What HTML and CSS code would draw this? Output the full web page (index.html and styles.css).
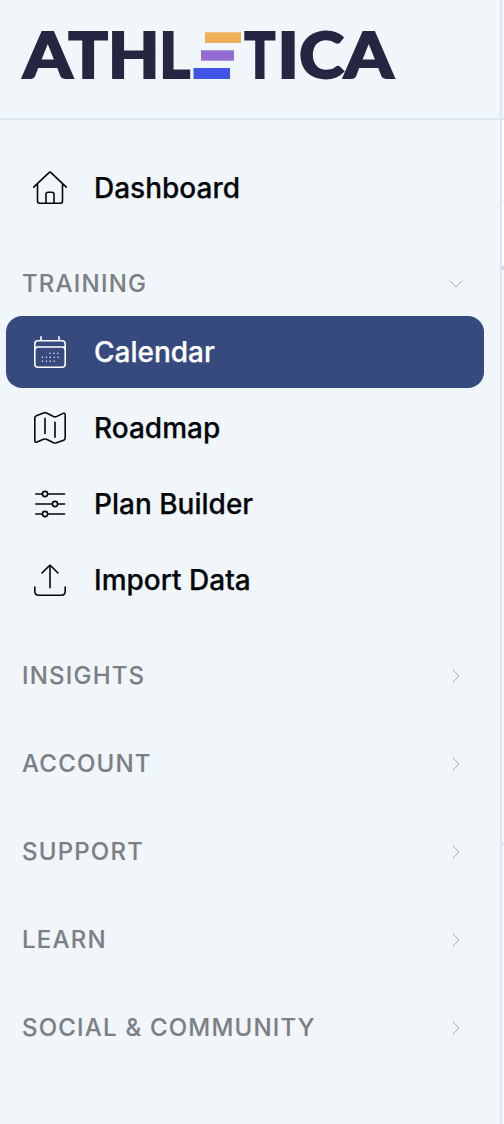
FILE: index.html
```html
<!DOCTYPE html>
<html lang="en">
<head>
<meta charset="utf-8">
<title>Athletica</title>
<link rel="stylesheet" href="styles.css">
</head>
<body>
<div class="app">
  <aside class="sidebar">
    <header class="brand">
      <svg class="logo" width="396" height="104" viewBox="10 5 396 104" role="img" aria-label="Athletica">
        <g class="wordmark">
          <text x="23" y="78.2" textLength="49.5" lengthAdjust="spacingAndGlyphs">A</text>
          <text x="68.3" y="78.2" textLength="39.8" lengthAdjust="spacingAndGlyphs">T</text>
          <text x="108" y="78.2" textLength="51.5" lengthAdjust="spacingAndGlyphs">H</text>
          <text x="159.3" y="78.2" textLength="31" lengthAdjust="spacingAndGlyphs">L</text>
          <text x="244.3" y="78.2" textLength="31.2" lengthAdjust="spacingAndGlyphs">T</text>
          <text x="277.2" y="78.2" textLength="21.8" lengthAdjust="spacingAndGlyphs">I</text>
          <text x="299" y="78.2" textLength="45" lengthAdjust="spacingAndGlyphs">C</text>
          <text x="344" y="78.2" textLength="49.5" lengthAdjust="spacingAndGlyphs">A</text>
        </g>
        <rect x="205" y="32.3" width="36" height="10.7" fill="#edb059"/>
        <rect x="201" y="50.3" width="33" height="10.4" fill="#946dd2"/>
        <rect x="193.5" y="68" width="36.5" height="11" fill="#4054e8"/>
      </svg>
    </header>
    <nav class="nav">
      <a class="item">
        <svg class="icon" viewBox="0 0 36 36"><path d="M1.7 17.2 17 2.6Q18 1.6 19 2.6L34.3 17.2M5.5 14v17Q5.5 33.2 7.7 33.2H28.3Q30.5 33.2 30.5 31V14M14 33V24.5Q14 22.3 16.2 22.3H19.8Q22 22.3 22 24.5V33"/></svg>
        <span>Dashboard</span>
      </a>
      <button class="section first"><span>TRAINING</span><svg class="chevron" viewBox="0 0 16 16"><path d="M2 5 8 11 14 5"/></svg></button>
      <div class="group">
        <a class="item active">
          <svg class="icon" viewBox="0 0 36 36"><path d="M9 2.8v3.8M27 2.8v3.8M6 6.7H30Q33.2 6.7 33.2 9.9V30Q33.2 33.3 30 33.3H6Q2.8 33.3 2.8 30V9.9Q2.8 6.7 6 6.7ZM2.8 16.3Q2.8 13 6 13H30Q33.2 13 33.2 16.3"/><path class="dots" d="M18 19.2h8M10.5 23.2h16M10.5 27.2h12"/></svg>
          <span>Calendar</span>
        </a>
        <a class="item">
          <svg class="icon" viewBox="0 0 36 36"><path d="M4.3 5.7 11.5 3Q13 2.3 14.5 3L21.5 6.5Q23 7.2 24.5 6.6L31 3.4Q33.2 2.6 33.2 5V27.5Q33.2 29.5 31.6 30.3L24.5 32.8Q23 33.3 21.5 32.8L14.5 29.3Q13 28.7 11.5 29.3L5 32Q2.8 32.7 2.8 30.5V8Q2.8 6.4 4.3 5.7ZM13 8.4V23.4M23 12.3V27.3"/></svg>
          <span>Roadmap</span>
        </a>
        <a class="item">
          <svg class="icon" viewBox="0 0 36 36"><path d="M3.8 8h6.6M15.6 8H32.5M3.8 18H20.4M25.6 18H32.5M3.8 28h6.6M15.6 28H32.5"/><circle cx="13" cy="8" r="2.6"/><circle cx="23" cy="18" r="2.6"/><circle cx="13" cy="28" r="2.6"/></svg>
          <span>Plan Builder</span>
        </a>
        <a class="item">
          <svg class="icon" viewBox="0 0 36 36"><path d="M18 25.7V3.2M10 11 17 4Q18 2.8 19 4L26 11M2.8 25V29.2Q2.8 33.3 7 33.3H29Q33.2 33.3 33.2 29.2V25"/></svg>
          <span>Import Data</span>
        </a>
      </div>
      <div class="sections">
        <button class="section"><span>INSIGHTS</span><svg class="chevron" viewBox="0 0 16 16"><path d="M5 2 11 8 5 14"/></svg></button>
        <button class="section"><span>ACCOUNT</span><svg class="chevron" viewBox="0 0 16 16"><path d="M5 2 11 8 5 14"/></svg></button>
        <button class="section"><span>SUPPORT</span><svg class="chevron" viewBox="0 0 16 16"><path d="M5 2 11 8 5 14"/></svg></button>
        <button class="section"><span>LEARN</span><svg class="chevron" viewBox="0 0 16 16"><path d="M5 2 11 8 5 14"/></svg></button>
        <button class="section"><span>SOCIAL &amp; COMMUNITY</span><svg class="chevron" viewBox="0 0 16 16"><path d="M5 2 11 8 5 14"/></svg></button>
      </div>
    </nav>
  </aside>
  <main class="content">
    <div class="topbar"></div>
    <div class="toolbar"></div>
    <div class="filters"></div>
    <div class="week"></div>
    <div class="rest"></div>
  </main>
</div>
</body>
</html>
```
FILE: styles.css
```css
* { box-sizing: border-box; }
body { margin: 0; background: #f0f6fa; font-family: Inter, "Liberation Sans", sans-serif; }
.app { display: flex; width: 504px; height: 1124px; overflow: hidden; }
.sidebar { width: 502px; flex: none; border-right: 2px solid #dce6f1; }
.brand { height: 120px; padding: 5px 0 0 10px; border-bottom: 2px solid #dce6f1; }
.logo { display: block; overflow: visible; }
.wordmark { fill: #252641; stroke: #252641; stroke-width: 1.8; font-family: Lato, sans-serif; font-size: 62.5px; font-weight: 900; }
.nav { padding: 32px 16px 0 6px; }
.item { display: flex; align-items: center; gap: 26px; height: 72px; padding-left: 26px; border-radius: 16px; color: #05070a; font-size: 28px; font-weight: 500; -webkit-text-stroke: .25px currentColor; }
.icon { width: 36px; height: 36px; flex: none; fill: none; stroke: currentColor; stroke-width: 1.6; stroke-linecap: round; stroke-linejoin: round; }
.dots { stroke-width: 1.4; stroke-dasharray: 0 3.9; }
.active { background: #374a7e; color: #fff; }
.group { display: flex; flex-direction: column; gap: 4px; }
.sections { display: flex; flex-direction: column; gap: 24px; margin-top: 28px; }
.section { display: flex; align-items: center; justify-content: space-between; width: 100%; height: 64px; padding: 0 20px 0 16px; border: 0; background: none; color: #7c7f84; font: 500 24px Inter, sans-serif; letter-spacing: 1.2px; -webkit-text-stroke: .1px currentColor; }
.section span { padding-bottom: 2px; }
.section.first { margin-top: 28px; }
.chevron { width: 16px; height: 16px; fill: none; stroke: #a9adb2; stroke-width: 1; stroke-linecap: round; stroke-linejoin: round; }
.content { flex: 1; display: flex; flex-direction: column; background: #f7f9fd; }
.topbar { height: 120px; background: #f0f6fa; border-bottom: 2px solid #dce6f1; }
.toolbar { height: 82px; background: #fff; border-bottom: 2px solid #f0f2f5; }
.filters { height: 68px; background: #fff; border-bottom: 4px solid #d2dae3; }
.week { height: 575px; border-bottom: 2px solid #dce6f1; }
.rest { flex: 1; background: #f2f7fd; }
```
